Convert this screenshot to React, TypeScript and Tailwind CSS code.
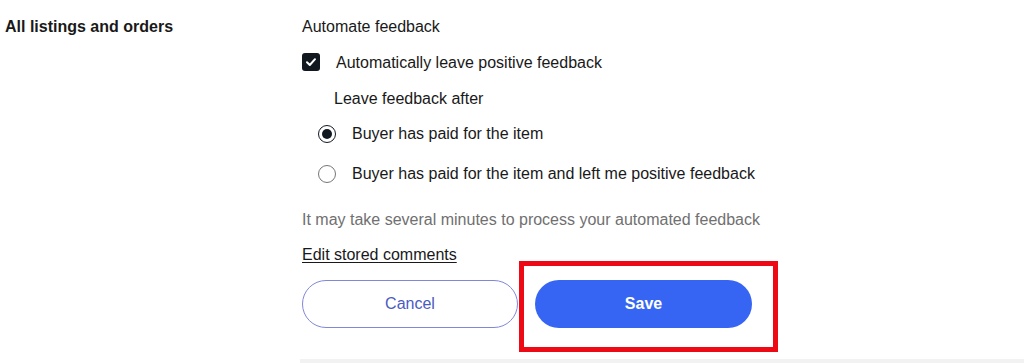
import React, { useState } from "react";

const font = "[font-family:'Liberation_Sans',Arial,sans-serif]";

export default function App() {
  const [auto, setAuto] = useState(true);
  const [after, setAfter] = useState("paid");

  return (
    <div className={`w-[1024px] h-[363px] overflow-hidden bg-white text-[#191919] ${font}`}>
      <div className="flex">
        {/* Section label */}
        <div className="w-[302px] shrink-0 pl-[5px] pt-[17px]">
          <div className="text-[16px] leading-5 font-bold">All listings and orders</div>
        </div>

        {/* Settings */}
        <div className="flex-1 flex flex-col pt-[17px]">
          <div className="text-[16px] leading-5">Automate feedback</div>

          <label className="mt-[16px] flex items-center h-[18px] cursor-pointer" onClick={() => setAuto(!auto)}>
            <span
              className={`w-[18px] h-[18px] rounded-[3px] flex items-center justify-center ${
                auto ? "bg-[#111820]" : "border-2 border-[#767676] bg-white"
              }`}
            >
              {auto && (
                <svg width="12" height="12" viewBox="0 0 12 12" fill="none">
                  <path d="M2 6.3 L4.8 9 L10 3.2" stroke="white" strokeWidth="2" strokeLinecap="round" strokeLinejoin="round" />
                </svg>
              )}
            </span>
            <span className="ml-[16px] text-[16px] leading-5 translate-y-[1px]">Automatically leave positive feedback</span>
          </label>

          <div className="mt-[18px] pl-[32px] text-[16px] leading-5">Leave feedback after</div>

          <div className="mt-[16px] pl-[16px] flex flex-col gap-[22px]">
            {[
              { id: "paid", text: "Buyer has paid for the item" },
              { id: "paidPositive", text: "Buyer has paid for the item and left me positive feedback" },
            ].map((o) => {
              const on = after === o.id;
              return (
                <label key={o.id} className="flex items-center h-[18px] cursor-pointer" onClick={() => setAfter(o.id)}>
                  <span
                    className={`w-[18px] h-[18px] rounded-full flex items-center justify-center bg-white ${
                      on ? "border-[1.5px] border-[#111820]" : "border border-[#767676]"
                    }`}
                  >
                    {on && <span className="w-[10px] h-[10px] rounded-full bg-[#111820]" />}
                  </span>
                  <span className="ml-[16px] text-[16px] leading-5">{o.text}</span>
                </label>
              );
            })}
          </div>

          <div className="mt-[27px] text-[16px] leading-5 text-[#707070]">
            It may take several minutes to process your automated feedback
          </div>

          <a href="#" className="mt-[15px] w-fit text-[16px] leading-5 text-[#191919] underline underline-offset-2">
            Edit stored comments
          </a>

          <div className="mt-[15px] flex gap-[17px]">
            <button className="w-[216px] h-[48px] rounded-full border border-[#8288d8] bg-white text-[16px] text-[#4a5ac4]">
              Cancel
            </button>
            <div className="relative">
              <button className="w-[217px] h-[48px] rounded-full bg-[#3665f3] text-[16px] font-bold text-white">
                Save
              </button>
              {/* annotation highlight */}
              <div className="absolute left-[-16px] top-[-19px] w-[259px] h-[91px] border-[5px] border-[#ee0a14] pointer-events-none" />
            </div>
          </div>

          <div className="mt-[31px] -ml-[2px] h-[4px] bg-[#f2f2f2]" />
        </div>
      </div>
    </div>
  );
}
